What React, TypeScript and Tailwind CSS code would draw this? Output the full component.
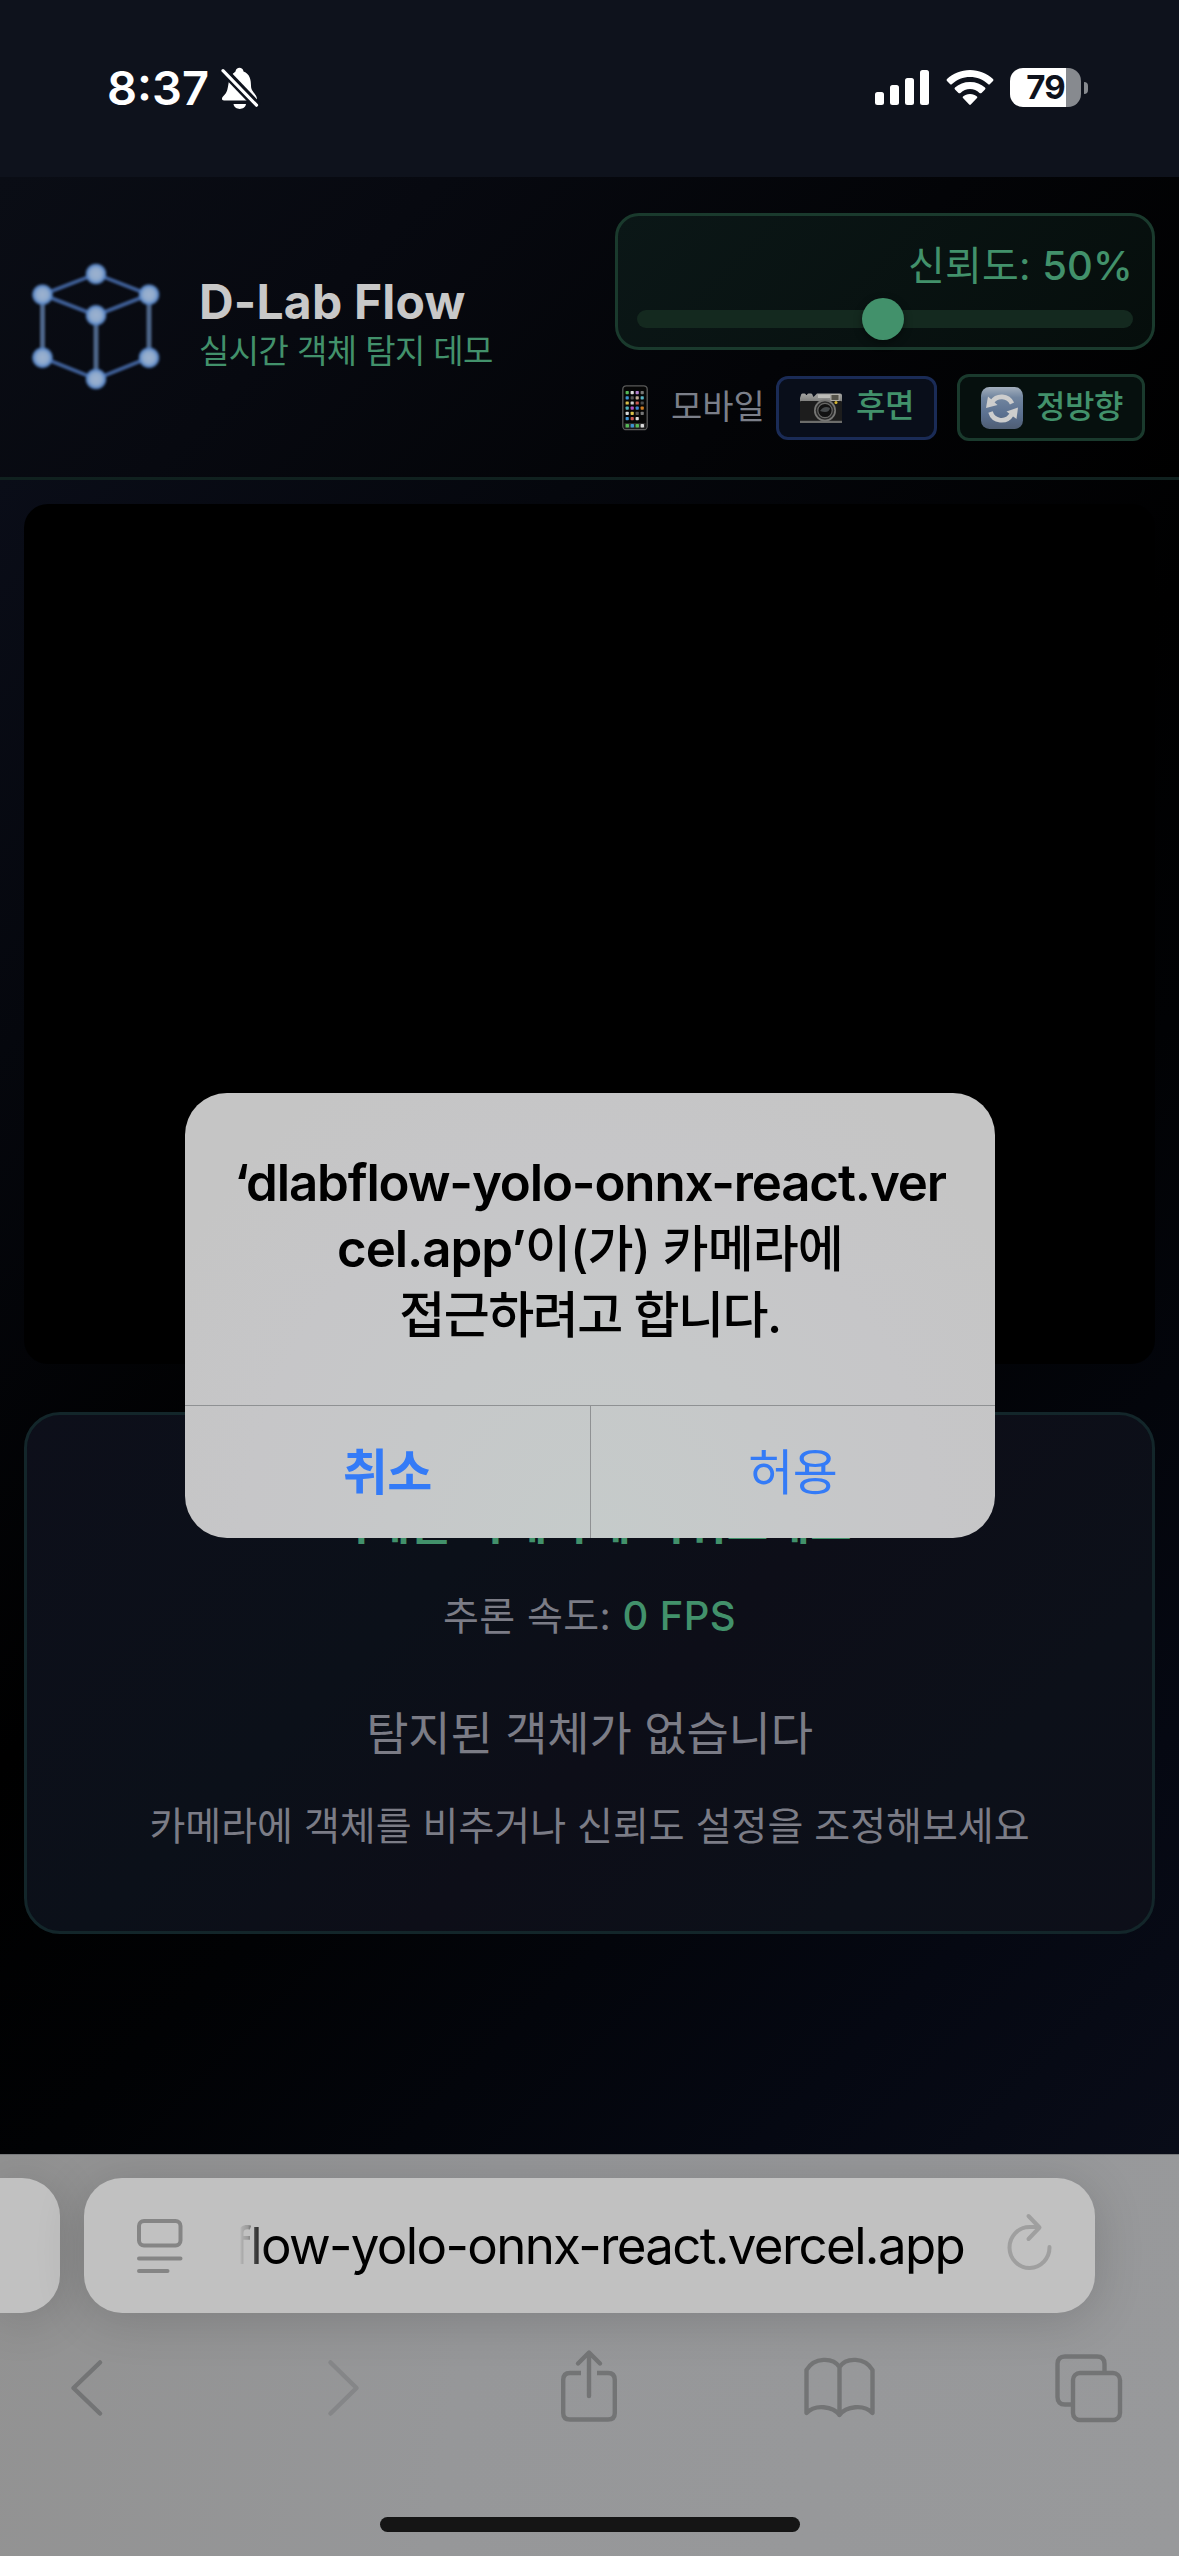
import React from "react";

function StatusBar() {
  return (
    <div className="flex h-[177px] items-start justify-between bg-[#0e121c] pl-[107px] pr-[91px] text-white">
      <div className="flex items-start">
        <span className="mt-[64px] w-[110px] whitespace-nowrap text-[47px] font-semibold leading-[48px]">8:37</span>
        <svg className="mt-[66px]" width="44" height="44" viewBox="0 0 44 44">
          <path d="M12 15 C14 8 17 7 18.500 5.500 C19 0.600 26 0.600 26.500 5.500 C33 8 34 14 34 20 C34 26 40 28 40 33 Q40 34.500 38 34.500 H7 C4.500 34.500 4.500 32 6 30.500 C11 26 10.500 22 12 15Z" fill="currentColor" />
          <path d="M16.500 38 H29 C28 44.500 17.500 44.500 16.500 38Z" fill="currentColor" />
          <path d="M5 3 L41 40.500" stroke="#0e121c" strokeWidth="8.500" />
          <path d="M4.500 6.500 L38 41" stroke="currentColor" strokeWidth="3.200" strokeLinecap="round" transform="translate(1.500 -1.800)" />
        </svg>
      </div>
      <div className="mt-[67px] flex items-start">
        <svg width="55" height="40" viewBox="0 0 55 40" fill="currentColor">
          <rect x="0" y="25" width="9" height="13" rx="2.500" />
          <rect x="15" y="18" width="9" height="20" rx="2.500" />
          <rect x="30" y="11" width="9" height="27" rx="2.500" />
          <rect x="45" y="3" width="9" height="35" rx="2.500" />
        </svg>
        <svg className="ml-[16px]" width="48" height="40" viewBox="0 0 48 40" fill="currentColor">
          <path d="M24 3 C33 3 41 6.500 47 12 Q48 13 47 14 L44 17 Q43 18 42 17 C37 12.500 31 10 24 10 C17 10 11 12.500 6 17 Q5 18 4 17 L1 14 Q0 13 1 12 C7 6.500 15 3 24 3Z" />
          <path d="M24 15 C30 15 35 17 39 20.500 Q40 21.500 39 22.500 L35.500 26 Q34.500 26.700 33.500 26 C31 23.500 27.500 22 24 22 C20.500 22 17 23.500 14.500 26 Q13.500 26.700 12.500 26 L9 22.500 Q8 21.500 9 20.500 C13 17 18 15 24 15Z" />
          <path d="M24 27 C27 27 29 28 31 29.500 Q31.800 30.300 31 31 L24.800 37.500 Q24 38.300 23.200 37.500 L17 31 Q16.200 30.300 17 29.500 C19 28 21 27 24 27Z" />
        </svg>
        <div className="ml-[16px] mt-[1px] flex items-center">
          <div className="flex h-[39px] w-[71px] items-center justify-center rounded-[13px] bg-[linear-gradient(90deg,#fff_56px,#878a8f_56px)] text-[33px] font-bold leading-[39px] tracking-[-1px] text-[#0e121c]">
            79
          </div>
          <div className="ml-[3px] h-[12px] w-[4px] rounded-r-full bg-[#878a8f]" />
        </div>
      </div>
    </div>
  );
}

const cubeEdges = ["M72 19 L18.500 39.700", "M72 19 L125 39.700", "M18.500 39.700 L72 60.300", "M125 39.700 L72 60.300", "M18.500 102.700 L72 124", "M125 102.700 L72 124"];
const cubePosts = ["M18.500 39.700 V102.700", "M125 39.700 V102.700", "M72 60.300 V124"];
const cubeNodes = [[72, 19], [18.5, 39.7], [125, 39.7], [72, 60.3], [18.5, 102.7], [125, 102.7], [72, 124]];

function Logo() {
  return (
    <svg className="blur-[1px]" width="144" height="144" viewBox="0 0 144 144" fill="none">
      <defs>
        <radialGradient id="node">
          <stop offset="0" stopColor="#9db2cf" />
          <stop offset="0.500" stopColor="#8faacd" />
          <stop offset="0.780" stopColor="#5e88c4" />
          <stop offset="1" stopColor="#3f6dad" stopOpacity="0" />
        </radialGradient>
      </defs>
      {cubeEdges.map((d) => <path key={d} d={d} stroke="#4265a0" strokeWidth="4" strokeOpacity="0.900" />)}
      {cubePosts.map((d) => <path key={d} d={d} stroke="#4d6589" strokeWidth="5" />)}
      {cubeNodes.map(([x, y]) => <circle key={x + "-" + y} cx={x} cy={y} r="11.500" fill="url(#node)" />)}
    </svg>
  );
}

const appColors = ["#56b956", "#d9d9d9", "#b57fd0", "#777777", "#3d92d0", "#555555", "#bfa890", "#56b3c4", "#d7bf4a", "#cccccc", "#c9594f", "#4c4c4c", "#4fb2b9", "#b14fc0", "#3d84d0", "#cf7d22", "#d9d9d9", "#d7bf4a", "#555555", "#777777", "#3d92d0", "#c9594f", "#d9d9d9"];

function PhoneIcon() {
  return (
    <svg width="26" height="46" viewBox="0 0 26 46">
      <rect x="0.800" y="0.800" width="24.400" height="43.900" rx="3.500" fill="#060606" stroke="#5a5a5a" strokeWidth="1.300" />
      {appColors.map((c, i) => (
        <rect key={i} x={3.6 + (i % 4) * 5} y={6 + Math.floor(i / 4) * 5.2} width="3.200" height="3.200" rx="0.700" fill={c} />
      ))}
      <rect x="2.500" y="38" width="21" height="5.500" fill="#2c2c2c" />
      {["#56b956", "#3d92d0", "#56b956", "#d9d9d9"].map((c, i) => (
        <rect key={i} x={3.6 + i * 5} y="39" width="3.400" height="3.400" rx="0.700" fill={c} />
      ))}
    </svg>
  );
}

function CameraIcon() {
  return (
    <svg width="42" height="31" viewBox="0 0 42 31">
      <defs>
        <linearGradient id="cam" x1="0" y1="0" x2="0" y2="1">
          <stop offset="0" stopColor="#a5a5a3" />
          <stop offset="1" stopColor="#7c7c7a" />
        </linearGradient>
      </defs>
      <path d="M1 3 Q1 1.500 2.500 1.500 H4.500 Q6 1.500 6 3 L7 3 Q7 1.500 8.500 1.500 H11 Q12.500 1.500 12.500 3 L13.500 5 L17 1.500 H40 Q42 1.500 42 3.500 V10 H0 V6Z" fill="url(#cam)" />
      <rect x="0" y="9" width="42" height="22" rx="1" fill="#1d1d1d" />
      <rect x="0" y="28.800" width="42" height="2.200" fill="#6c6c6a" />
      <rect x="18" y="2.500" width="12" height="3.500" fill="#bdbdb9" />
      <rect x="31" y="2.500" width="8" height="6" fill="#55534a" stroke="#c0beb5" strokeWidth="0.800" />
      <circle cx="36" cy="10.500" r="1.500" fill="#d5b531" />
      <circle cx="25" cy="18.500" r="11" fill="#777775" />
      <circle cx="25" cy="18.500" r="9.300" fill="#2a2a2a" />
      <circle cx="25" cy="18.500" r="7.200" fill="#111" stroke="#686866" strokeWidth="1.200" />
      <path d="M20 19 Q24 13 30 16 Q29 22 20 19Z" fill="#45494b" />
    </svg>
  );
}

function RefreshIcon() {
  return (
    <svg width="42" height="42" viewBox="0 0 42 42">
      <defs>
        <linearGradient id="ref" x1="0" y1="0" x2="0" y2="1">
          <stop offset="0" stopColor="#a3afbd" />
          <stop offset="0.250" stopColor="#71859f" />
          <stop offset="0.650" stopColor="#5b7090" />
          <stop offset="1" stopColor="#4f5d73" />
        </linearGradient>
      </defs>
      <rect width="42" height="42" rx="8.500" fill="url(#ref)" />
      <path d="M31 16.500 A11.500 11.500 0 0 0 11 15" fill="none" stroke="#cdcdcd" strokeWidth="4.600" />
      <path d="M5 21 L7 9.500 L16.500 18Z" fill="#cdcdcd" />
      <path d="M9.500 25 A11.500 11.500 0 0 0 30.500 27.500" fill="none" stroke="#cdcdcd" strokeWidth="4.600" />
      <path d="M37 20.500 L35.500 32 L25.500 24.500Z" fill="#cdcdcd" />
    </svg>
  );
}

function Header() {
  return (
    <header className="flex h-[303px] items-center justify-between border-b-[3px] border-[#10211f] bg-[linear-gradient(135deg,#0a0d15_0%,#070910_30%,#030407_65%,#000_100%)] px-6">
      <div className="flex items-center gap-[31px]">
        <Logo />
        <div className="-mt-[2px]">
          <h1 className="whitespace-nowrap text-[48px] font-bold leading-[50px] tracking-[0.2px] text-[#c8c8c8]">D-Lab Flow</h1>
          <p className="whitespace-nowrap text-[33px] leading-[48px] tracking-[-0.6px] text-[#42916b]">실시간 객체 탐지 데모</p>
        </div>
      </div>
      <div className="flex w-[540px] flex-col gap-6">
        <div className="h-[137px] rounded-[24px] border-[3px] border-[#1a3a2d] bg-[linear-gradient(135deg,#0b1717,#060e0c)] px-[19px] pt-[26px]">
          <div className="whitespace-nowrap text-right text-[40px] leading-[48px] tracking-[0.2px] text-[#42916b]">
            신뢰도: <span className="font-medium">50%</span>
          </div>
          <div className="mt-[20px] flex h-[18px] items-center justify-center rounded-full bg-[#14291f]">
            <div className="mr-[4px] h-[42px] w-[42px] rounded-full bg-[#42916b] shadow-[0_3px_8px_rgba(0,0,0,0.4)]" />
          </div>
        </div>
        <div className="flex h-[67px] items-center pl-[7px]">
          <PhoneIcon />
          <span className="-mt-[2px] ml-[23px] w-[105px] whitespace-nowrap text-[34px] leading-[48px] text-[#7b7f89]">모바일</span>
          <div className="mr-5 flex h-[64px] w-[161px] items-center gap-[14px] rounded-[12px] border-[3px] border-[#1a2b56] bg-[#090e1a] pl-[21px]">
            <CameraIcon />
            <span className="-mt-[3px] whitespace-nowrap text-[32px] font-medium leading-[48px] tracking-[-0.4px] text-[#42916b]">후면</span>
          </div>
          <div className="flex h-[67px] w-[188px] items-center gap-[13px] rounded-[12px] border-[3px] border-[#1a3a2d] bg-[#06100e] pl-[21px]">
            <RefreshIcon />
            <span className="-mt-px whitespace-nowrap text-[32px] font-medium leading-[48px] tracking-[-0.4px] text-[#42916b]">정방향</span>
          </div>
        </div>
      </div>
    </header>
  );
}

function ResultCard() {
  return (
    <section className="mt-12 flex h-[522px] flex-col items-center whitespace-nowrap rounded-[36px] border-[3px] border-[#13262a] bg-[linear-gradient(135deg,#0d0f1a_0%,#0b1019_35%,#0d0e18_55%,#0c1019_80%,#0d0f19_100%)] pt-[82px] text-[#7b7c86]">
      <h2 className="text-[45px] font-semibold leading-[54px] tracking-[0.4px] text-[#42916b]">객체를 카메라에 비춰보세요</h2>
      <p className="mt-[41px] text-[39px] leading-[48px] tracking-[0.4px]">
        추론 속도: <span className="text-[40px] font-medium text-[#42916b]">0 FPS</span>
      </p>
      <p className="mt-[66px] text-[46px] leading-[54px] tracking-[-0.2px]">탐지된 객체가 없습니다</p>
      <p className="mt-[42px] text-[39px] leading-[48px]">카메라에 객체를 비추거나 신뢰도 설정을 조정해보세요</p>
    </section>
  );
}

function PermissionDialog() {
  return (
    <div className="absolute left-[185px] top-[1093px] flex h-[445px] w-[810px] flex-col overflow-hidden rounded-[42px] bg-[#c6c6c8] bg-[radial-gradient(ellipse_at_50%_105%,#c5cbca_0%,#c6c8c9_35%,#c6c6c8_60%,#c5c5c5_85%)]">
      <div className="h-[312px] shrink-0 pt-[57px] text-center text-[51px] font-semibold leading-[66px] text-black">
        <p className="whitespace-nowrap tracking-[-1.15px]">‘dlabflow-yolo-onnx-react.ver</p>
        <p className="whitespace-nowrap tracking-[-1.05px]">
          cel.app’<span className="text-[50px] font-medium tracking-[-0.9px]">이(가) 카메라에</span>
        </p>
        <p className="whitespace-nowrap text-[50px] font-medium tracking-[-1.5px]">접근하려고 합니다.</p>
      </div>
      <div className="flex flex-1 border-t border-[#8f9193] text-[49px] leading-[130px] tracking-[-0.6px] text-[#347bf7]">
        <button className="flex-1 pt-[2px] font-semibold">취소</button>
        <button className="flex-1 border-l border-[#8f9193] pt-[2px]">허용</button>
      </div>
    </div>
  );
}

function BrowserBar() {
  return (
    <footer className="flex h-[402px] flex-col overflow-hidden border-t border-[#77787a] bg-[linear-gradient(100deg,#929292_0%,#969799_40%,#98999b_100%)]">
      <div className="mt-[23px] flex gap-6">
        <div className="h-[135px] w-[60px] rounded-r-[38px] bg-[#c1c1c1] shadow-[0_6px_50px_rgba(0,0,0,0.16)]" />
        <div className="flex h-[135px] w-[1011px] items-center rounded-[38px] bg-[#c1c1c1] shadow-[0_6px_50px_rgba(0,0,0,0.16)]">
          <svg className="ml-[53px]" width="46" height="56" viewBox="0 0 46 56" fill="none" stroke="#858585" strokeWidth="4" strokeLinecap="round">
            <rect x="2" y="3" width="41.500" height="24.500" rx="5" />
            <path d="M2 40.500 H43.500 M2 53 H30.500" />
          </svg>
          <div className="ml-[50px] w-[748px] whitespace-nowrap text-[51px] leading-[66px] tracking-[-1.65px] text-black">
            <span className="bg-[linear-gradient(90deg,transparent_7px,rgba(0,0,0,0.1)_9px,rgba(0,0,0,0.2)_15px,rgba(0,0,0,0.6)_20px,#000_34px)] bg-clip-text text-transparent">flow-yolo-onnx-react.vercel.app</span>
          </div>
          <svg className="-mt-[10px] ml-[25px]" width="48" height="58" viewBox="0 0 48 58" fill="none" stroke="#9f9f9f" strokeWidth="4" strokeLinecap="round" strokeLinejoin="round">
            <path d="M43.500 35 A20 20.500 0 1 1 23.500 15 H32" />
            <path d="M22.500 4 L33.500 15.500 L22.500 27" />
          </svg>
        </div>
      </div>
      <div className="mt-[34px] flex h-[80px] w-full items-start pl-[69px] text-[#737475]">
        <svg width="36" height="80" viewBox="0 0 36 80" fill="none" stroke="currentColor" strokeWidth="4.500" strokeLinecap="round" strokeLinejoin="round">
          <path d="M31 15.500 L4.500 41 L31 66.500" />
        </svg>
        <svg className="ml-[221px] text-[#858688]" width="36" height="80" viewBox="0 0 36 80" fill="none" stroke="currentColor" strokeWidth="4.500" strokeLinecap="round" strokeLinejoin="round">
          <path d="M4.500 15.500 L30.500 41 L4.500 66.500" />
        </svg>
        <svg className="ml-[197px]" width="60" height="80" viewBox="0 0 60 80" fill="none" stroke="currentColor" strokeWidth="4.400" strokeLinecap="round" strokeLinejoin="round">
          <path d="M22 26 H11 Q4.200 26 4.200 33 V66 Q4.200 72.500 11 72.500 H49 Q55.800 72.500 55.800 66 V33 Q55.800 26 49 26 H38" strokeLinecap="butt" />
          <path d="M30 49 V6 M19 16.500 L30 5.500 L41 16.500" />
        </svg>
        <svg className="ml-[183px]" width="76" height="80" viewBox="0 0 76 80" fill="none" stroke="currentColor" strokeWidth="4.400" strokeLinejoin="round">
          <path d="M37.500 68 C31 59 13 57 4.500 66 V23 C12 10 31 10 37.500 20 V68 C44 59 62 57 70.500 66 V23 C63 10 44 10 37.500 20" />
        </svg>
        <svg className="ml-[176px]" width="72" height="80" viewBox="0 0 72 80" fill="none" stroke="currentColor" strokeWidth="4.400">
          <rect x="19" y="26" width="47" height="47" rx="7" />
          <path d="M19 57.500 H11 Q3.500 57.500 3.500 50 V17 Q3.500 9.500 11 9.500 H43 Q50.500 9.500 50.500 17 V26" />
        </svg>
      </div>
      <div className="mx-auto mt-[90px] h-[15px] w-[420px] rounded-full bg-[#151515]" />
    </footer>
  );
}

export default function App() {
  return (
    <div className="relative flex h-[2556px] w-[1179px] flex-col overflow-hidden bg-black font-['Inter','Noto_Sans_CJK_KR',sans-serif]">
      <StatusBar />
      <Header />
      <main className="flex-1 bg-[linear-gradient(135deg,#0a0d18_0%,#05070d_20%,#000_45%,#010204_60%,#050812_85%,#090c18_100%)] px-6 pt-6">
        <div className="h-[860px] rounded-[24px] bg-black" />
        <ResultCard />
      </main>
      <BrowserBar />
      <PermissionDialog />
    </div>
  );
}
